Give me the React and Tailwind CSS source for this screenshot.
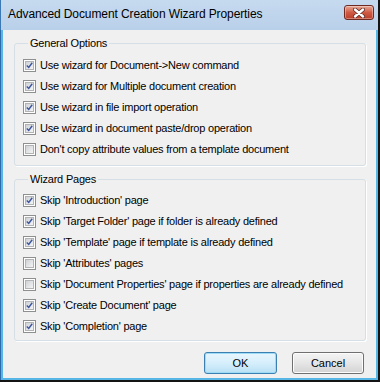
const general = [
  { label: "Use wizard for Document->New command", checked: true },
  { label: "Use wizard for Multiple document creation", checked: true },
  { label: "Use wizard in file import operation", checked: true },
  { label: "Use wizard in document paste/drop operation", checked: true },
  { label: "Don't copy attribute values from a template document", checked: false },
];

const pages = [
  { label: "Skip 'Introduction' page", checked: true },
  { label: "Skip 'Target Folder' page if folder is already defined", checked: true },
  { label: "Skip 'Template' page if template is already defined", checked: true },
  { label: "Skip 'Attributes' pages", checked: false },
  { label: "Skip 'Document Properties' page if properties are already defined", checked: false },
  { label: "Skip 'Create Document' page", checked: true },
  { label: "Skip 'Completion' page", checked: true },
];

function Check({ checked }) {
  return (
    <span className="flex h-[13px] w-[13px] shrink-0 items-center justify-center border border-[#8e8f8f] bg-white p-[1px]">
      <span className="flex h-full w-full items-center justify-center border border-[#b2b3b5] bg-gradient-to-br from-[#cfd2d6] to-[#f4f4f4]">
        {checked && (
          <svg width="9" height="9" viewBox="0 0 9 9" className="-mt-[1px]">
            <path d="M1 4.5 L3.5 7 L8 1" fill="none" stroke="#3b55a0" strokeWidth="1.8" />
          </svg>
        )}
      </span>
    </span>
  );
}

function Group({ title, items, className }) {
  return (
    <fieldset
      className={
        "mx-0 rounded-[3px] border border-[#d5dfe5] pl-[8px] pr-2 shadow-[1px_1px_0_#fff] " + className
      }
    >
      <legend className="ml-[5px] px-[2px] leading-[13px] tracking-[-0.2px] text-[#000]">{title}</legend>
      {items.map((it) => (
        <label key={it.label} className="flex h-[21px] items-center gap-[4px] text-black">
          <Check checked={it.checked} />
          <span className="whitespace-nowrap tracking-[-0.22px]">{it.label}</span>
        </label>
      ))}
    </fieldset>
  );
}

export default function App() {
  return (
    <div
      className="flex h-[382px] w-[380px] flex-col border-b-2 border-r-2 border-[#141414] text-[11px]"
      style={{ fontFamily: '"Liberation Sans", Arial, sans-serif' }}
    >
      <div className="flex h-[30px] items-start justify-between border-l border-[#3a78b6] bg-gradient-to-b from-[#c6daef] to-[#b9d0ea] pl-[7px] pr-[4px]">
        <span className="mt-[7px] text-[12px] leading-[15px] tracking-[-0.1px] text-black">
          Advanced Document Creation Wizard Properties
        </span>
        <button className="mt-[5px] flex h-[15px] w-[30px] items-center justify-center rounded-[3px] border border-[#6e2a22] bg-gradient-to-b from-[#e6a898] via-[#cf5a43] to-[#bb3d28] shadow-[inset_0_0_0_1px_rgba(255,255,255,0.35)]">
          <svg width="12" height="10" viewBox="0 0 12 10">
            <path d="M2 1.5 L10 8.5 M10 1.5 L2 8.5" stroke="#5a2a25" strokeWidth="4" strokeLinecap="round" />
            <path d="M2 1.5 L10 8.5 M10 1.5 L2 8.5" stroke="#ffffff" strokeWidth="2.4" strokeLinecap="round" />
          </svg>
        </button>
      </div>
      <div className="flex flex-1 flex-col border-l border-[#2d6aa8] bg-[#56b6e6] pb-[2px] pl-[2px] pr-[2px]">
        <div className="flex flex-1 flex-col bg-[#f0f0f0] pl-[11px] pr-[10px]">
          <Group title="General Options" items={general} className="mt-[7px] pt-[5px] pb-[5px]" />
          <Group title="Wizard Pages" items={pages} className="mt-[7px] pt-[4px] pb-[3px]" />
          <div className="mt-[11px] flex justify-end gap-[15px] pr-[2px]">
            <button className="h-[22px] w-[73px] rounded-[3px] border border-[#3c7fb1] bg-gradient-to-b from-[#e9f6fd] via-[#d6effc] to-[#b9e0f5] text-black shadow-[inset_0_0_0_1px_#9ddcf6]">
              OK
            </button>
            <button className="h-[22px] w-[72px] rounded-[3px] border border-[#707070] bg-gradient-to-b from-[#f4f4f4] via-[#e6e6e6] to-[#d3d3d3] text-black shadow-[inset_0_0_0_1px_#fcfcfc]">
              Cancel
            </button>
          </div>
        </div>
      </div>
    </div>
  );
}
